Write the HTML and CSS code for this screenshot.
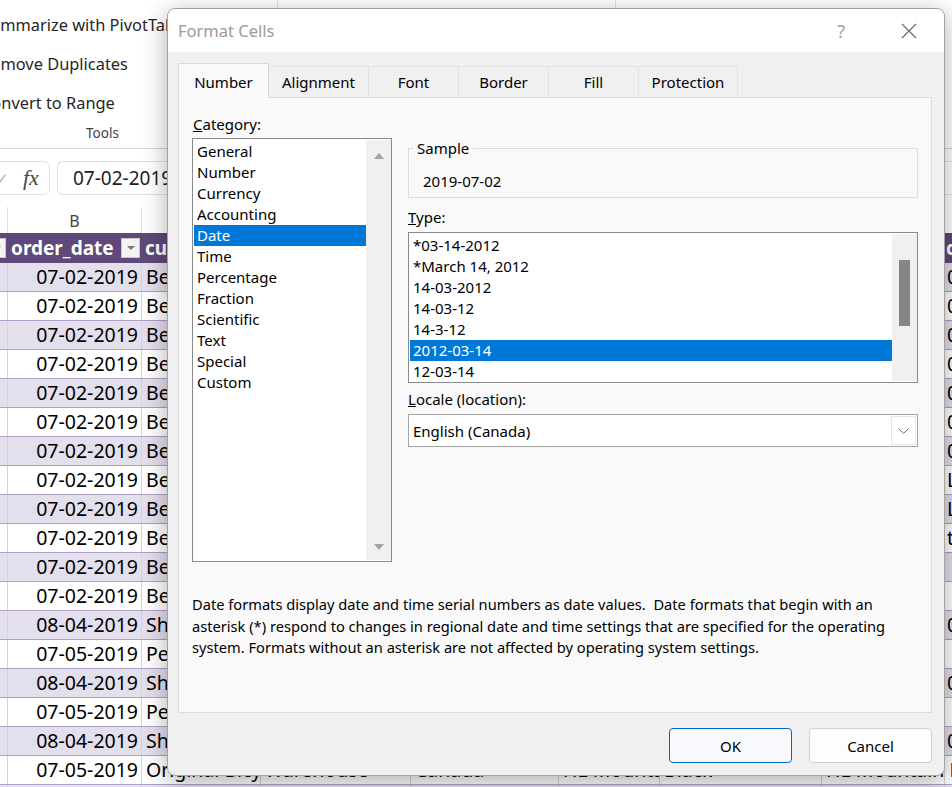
FILE: index.html
```html
<!DOCTYPE html>
<html>
<head>
<meta charset="utf-8">
<link rel="stylesheet" href="styles.css">
</head>
<body>
<div class="excel">
  <div class="ribbon">
    <div class="rb-group g1">
      <div class="rb-cmds">
        <div class="cmd">Summarize with PivotTable</div>
        <div class="cmd">Remove Duplicates</div>
        <div class="cmd">Convert to Range</div>
      </div>
      <div class="rb-label">Tools</div>
    </div>
    <div class="rb-group g2"></div>
    <div class="rb-group g3"></div>
  </div>

  <div class="fbar">
    <div class="fx-box"><span class="check">✓</span><span class="fx">fx</span></div>
    <div class="f-input">07-02-2019</div>
  </div>

  <div class="sheet">
    <div class="row colhdr">
      <div class="c"></div><div class="c">B</div><div class="c">C</div><div class="c">D</div><div class="c">E</div><div class="c">F</div><div class="c">G</div><div class="c">H</div><div class="c">I</div>
    </div>
    <div class="row thead">
      <div class="c hc first"><span class="dd"><span class="tri"></span></span></div>
      <div class="c hc"><span class="ht">order_date</span><span class="dd"><span class="tri"></span></span></div>
      <div class="c hc"><span class="ht">customer_name</span></div>
      <div class="c hc"><span class="ht">store_type</span></div>
      <div class="c hc"><span class="ht">country</span></div>
      <div class="c hc"><span class="ht">product</span></div>
      <div class="c hc"><span class="ht">color</span></div>
      <div class="c hc"><span class="ht">model</span></div>
      <div class="c hc last"><span class="ht">description</span></div>
    </div>

    <div class="row band"><div class="c"></div><div class="c num">07-02-2019</div><div class="c">Bellevue Bike Store</div><div class="c">Specialty</div><div class="c">United States</div><div class="c">Road Frame</div><div class="c">Red</div><div class="c">Road-150</div><div class="c last">0</div></div>
    <div class="row"><div class="c"></div><div class="c num">07-02-2019</div><div class="c">Bellevue Bike Store</div><div class="c">Specialty</div><div class="c">United States</div><div class="c">Road Frame</div><div class="c">Red</div><div class="c">Road-150</div><div class="c last">0</div></div>
    <div class="row band"><div class="c"></div><div class="c num">07-02-2019</div><div class="c">Bellevue Bike Store</div><div class="c">Specialty</div><div class="c">United States</div><div class="c">Road Frame</div><div class="c">Red</div><div class="c">Road-150</div><div class="c last">0</div></div>
    <div class="row"><div class="c"></div><div class="c num">07-02-2019</div><div class="c">Bellevue Bike Store</div><div class="c">Specialty</div><div class="c">United States</div><div class="c">Road Frame</div><div class="c">Red</div><div class="c">Road-150</div><div class="c last">0</div></div>
    <div class="row band"><div class="c"></div><div class="c num">07-02-2019</div><div class="c">Bellevue Bike Store</div><div class="c">Specialty</div><div class="c">United States</div><div class="c">Road Frame</div><div class="c">Red</div><div class="c">Road-150</div><div class="c last">0</div></div>
    <div class="row"><div class="c"></div><div class="c num">07-02-2019</div><div class="c">Bellevue Bike Store</div><div class="c">Specialty</div><div class="c">United States</div><div class="c">Road Frame</div><div class="c">Red</div><div class="c">Road-150</div><div class="c last">0</div></div>
    <div class="row band"><div class="c"></div><div class="c num">07-02-2019</div><div class="c">Bellevue Bike Store</div><div class="c">Specialty</div><div class="c">United States</div><div class="c">Road Frame</div><div class="c">Red</div><div class="c">Road-150</div><div class="c last">0</div></div>
    <div class="row"><div class="c"></div><div class="c num">07-02-2019</div><div class="c">Bellevue Bike Store</div><div class="c">Specialty</div><div class="c">United States</div><div class="c">Mountain</div><div class="c">Silver</div><div class="c">Mountain-200</div><div class="c last">Lo</div></div>
    <div class="row band"><div class="c"></div><div class="c num">07-02-2019</div><div class="c">Bellevue Bike Store</div><div class="c">Specialty</div><div class="c">United States</div><div class="c">Mountain</div><div class="c">Silver</div><div class="c">Mountain-200</div><div class="c last">Lo</div></div>
    <div class="row"><div class="c"></div><div class="c num">07-02-2019</div><div class="c">Bellevue Bike Store</div><div class="c">Specialty</div><div class="c">United States</div><div class="c">Touring</div><div class="c">Blue</div><div class="c">Touring-1000</div><div class="c last">te</div></div>
    <div class="row band"><div class="c"></div><div class="c num">07-02-2019</div><div class="c">Bellevue Bike Store</div><div class="c">Specialty</div><div class="c">United States</div><div class="c">Touring</div><div class="c">Blue</div><div class="c">Touring-1000</div><div class="c last"></div></div>
    <div class="row"><div class="c"></div><div class="c num">07-02-2019</div><div class="c">Bellevue Bike Store</div><div class="c">Specialty</div><div class="c">United States</div><div class="c">Touring</div><div class="c">Blue</div><div class="c">Touring-1000</div><div class="c last"></div></div>
    <div class="row band"><div class="c"></div><div class="c num">08-04-2019</div><div class="c">Shore Bicycles</div><div class="c">Specialty</div><div class="c">Canada</div><div class="c">Road Frame</div><div class="c">Black</div><div class="c">Road-250</div><div class="c last">0</div></div>
    <div class="row"><div class="c"></div><div class="c num">07-05-2019</div><div class="c">Pedal Pushers</div><div class="c">Warehouse</div><div class="c">Canada</div><div class="c">Road Frame</div><div class="c">Black</div><div class="c">Road-250</div><div class="c last"></div></div>
    <div class="row band"><div class="c"></div><div class="c num">08-04-2019</div><div class="c">Shore Bicycles</div><div class="c">Specialty</div><div class="c">Canada</div><div class="c">Road Frame</div><div class="c">Black</div><div class="c">Road-250</div><div class="c last">0</div></div>
    <div class="row"><div class="c"></div><div class="c num">07-05-2019</div><div class="c">Pedal Pushers</div><div class="c">Warehouse</div><div class="c">Canada</div><div class="c">Road Frame</div><div class="c">Black</div><div class="c">Road-250</div><div class="c last"></div></div>
    <div class="row band"><div class="c"></div><div class="c num">08-04-2019</div><div class="c">Shore Bicycles</div><div class="c">Specialty</div><div class="c">Canada</div><div class="c">Road Frame</div><div class="c">Black</div><div class="c">Road-250</div><div class="c last">0</div></div>
    <div class="row"><div class="c"></div><div class="c num">07-05-2019</div><div class="c">Original Bicycle Supply</div><div class="c">Warehouse</div><div class="c">Canada</div><div class="c">HL Mountain Frame</div><div class="c">Black</div><div class="c ov">HL Mountain Frame - Black</div><div class="c last"></div></div>
    <div class="row band"><div class="c"></div><div class="c num">08-04-2019</div><div class="c">Shore Bicycles</div><div class="c">Specialty</div><div class="c">Canada</div><div class="c">Road Frame</div><div class="c">Black</div><div class="c">Road-250</div><div class="c last">0</div></div>
  </div>
</div>

<div class="dialog">
  <div class="dlg-title">
    <span class="t">Format Cells</span>
    <span class="help">?</span>
    <svg class="close" width="16" height="16" viewBox="0 0 16 16"><path d="M1 1 L15 15 M15 1 L1 15" stroke="#6b6b6b" stroke-width="1.2" fill="none"/></svg>
  </div>
  <div class="dlg-body">
    <div class="tabs">
      <div class="tab active w91">Number</div>
      <div class="tab w101">Alignment</div>
      <div class="tab w91">Font</div>
      <div class="tab w91">Border</div>
      <div class="tab w91">Fill</div>
      <div class="tab w100">Protection</div>
    </div>
    <div class="panel">
      <div class="cols">
        <div class="left">
          <div class="lbl cat-lbl"><u>C</u>ategory:</div>
          <div class="listbox cat">
            <div class="items">
              <div class="it">General</div>
              <div class="it">Number</div>
              <div class="it">Currency</div>
              <div class="it">Accounting</div>
              <div class="it sel">Date</div>
              <div class="it">Time</div>
              <div class="it">Percentage</div>
              <div class="it">Fraction</div>
              <div class="it">Scientific</div>
              <div class="it">Text</div>
              <div class="it">Special</div>
              <div class="it">Custom</div>
            </div>
            <div class="sb arrows">
              <svg width="10" height="6" viewBox="0 0 10 6"><path d="M0 6 L5 0 L10 6 Z" fill="#a3a3a3"/></svg>
              <svg width="10" height="6" viewBox="0 0 10 6"><path d="M0 0 L10 0 L5 6 Z" fill="#a3a3a3"/></svg>
            </div>
          </div>
        </div>
        <div class="right">
          <fieldset class="sample">
            <legend>Sample</legend>
            <div class="sample-val">2019-07-02</div>
          </fieldset>
          <div class="lbl type-lbl"><u>T</u>ype:</div>
          <div class="listbox type">
            <div class="items">
              <div class="it">*03-14-2012</div>
              <div class="it">*March 14, 2012</div>
              <div class="it">14-03-2012</div>
              <div class="it">14-03-12</div>
              <div class="it">14-3-12</div>
              <div class="it sel">2012-03-14</div>
              <div class="it">12-03-14</div>
            </div>
            <div class="sb"><div class="thumb"></div></div>
          </div>
          <div class="lbl loc-lbl"><u>L</u>ocale (location):</div>
          <div class="combo">
            <span class="combo-val">English (Canada)</span>
            <span class="combo-btn"><svg width="11" height="6" viewBox="0 0 11 6"><path d="M0.5 0.5 L5.5 5.5 L10.5 0.5" stroke="#6b6b6b" stroke-width="1" fill="none"/></svg></span>
          </div>
        </div>
      </div>
      <p class="desc">Date formats display date and time serial numbers as date values.&nbsp; Date formats that begin with an asterisk (*) respond to changes in regional date and time settings that are specified for the operating system. Formats without an asterisk are not affected by operating system settings.</p>
    </div>
    <div class="btns">
      <button class="btn ok">OK</button>
      <button class="btn">Cancel</button>
    </div>
  </div>
</div>
</body>
</html>
```
FILE: styles.css
```css
* { box-sizing: border-box; }

body {
  margin: 0;
  width: 952px;
  height: 787px;
  overflow: hidden;
  position: relative;
  background: #fff;
  font-family: "Noto Sans", "Open Sans", sans-serif;
  color: #000;
}

/* ---------- Excel background ---------- */
.excel { width: 952px; overflow: hidden; }

.ribbon {
  height: 149px;
  border-bottom: 1px solid #d6d6d6;
  display: flex;
  background: #fff;
}
.rb-group { height: 140px; border-right: 1px solid #e1e1e1; }
.g1 {
  margin-left: -72px;
  width: 350px;
  flex: none;
  display: flex;
  flex-direction: column;
}
.g2 { width: 338px; flex: none; }
.g3 { flex: 1; border-right: none; }
.rb-cmds { padding-left: 53px; padding-top: 5px; }
.cmd {
  height: 39px;
  line-height: 39px;
  font-size: 16.4px;
  color: #262626;
  white-space: nowrap;
}
.rb-label {
  text-align: center;
  font-size: 13.5px;
  color: #444;
  line-height: 20px;
  margin-top: 1px;
}

.fbar {
  height: 56px;
  display: flex;
  align-items: flex-start;
  gap: 7px;
  padding-top: 12px;
}
.fx-box {
  flex: none;
  margin-left: -40px;
  width: 90px;
  height: 34px;
  border: 1px solid #e0e0e0;
  border-radius: 6px;
  display: flex;
  align-items: center;
  gap: 14px;
  padding-left: 35px;
}
.check { color: #b0b0b0; font-size: 15px; }
.fx {
  font-family: "Liberation Serif", serif;
  font-style: italic;
  font-size: 22px;
  color: #444;
}
.f-input {
  flex: 1;
  height: 34px;
  border: 1px solid #e0e0e0;
  border-radius: 6px 0 0 6px;
  border-right: none;
  padding-left: 15px;
  line-height: 32px;
  font-size: 19px;
  color: #222;
}

.sheet { font-size: 19.5px; }
.row {
  display: grid;
  grid-template-columns: 8px 134px 119px 150px 148px 101px 162px 123px 60px;
  height: 29px;
  border-bottom: 1px solid #b1a0c7;
  background: #fff;
}
.row.band { background: #e4dfec; }
.c {
  border-right: 1px solid #d4d4d4;
  white-space: nowrap;
  overflow: hidden;
  line-height: 28px;
  padding-left: 4px;
}
.c.num { text-align: right; padding-right: 3px; padding-left: 0; }
.c.ov { overflow: visible; }
.c.last { padding-left: 2px; }

.row.colhdr {
  height: 28px;
  border-bottom: none;
  background: #fff;
}
.colhdr .c {
  text-align: center;
  font-size: 16px;
  color: #444;
  border-right: 1px solid #e1e1e1;
  line-height: 28px;
  padding: 0;
  margin-top: 2px;
}

.row.thead {
  height: 30px;
  background: #60497a;
  border-bottom: none;
}
.hc {
  border-right: none;
  display: flex;
  align-items: center;
  justify-content: space-between;
  padding-left: 3px;
  overflow: visible;
}
.hc.first { justify-content: flex-end; padding: 0; }
.hc.last { padding-left: 1px; }
.ht {
  color: #fff;
  font-weight: bold;
  font-size: 19px;
  overflow: hidden;
}
.dd {
  flex: none;
  width: 19px;
  height: 20px;
  background: #f3f3f3;
  border: 1px solid #c8c8c8;
  margin-right: 2px;
  display: flex;
  align-items: center;
  justify-content: center;
}
.tri {
  width: 0; height: 0;
  border-left: 4px solid transparent;
  border-right: 4px solid transparent;
  border-top: 4px solid #777;
}

/* ---------- Dialog ---------- */
.dialog {
  position: absolute;
  left: 167px;
  top: 8px;
  width: 778px;
  height: 768px;
  border: 1px solid #a3a3a3;
  border-radius: 8px;
  box-shadow: 0 6px 26px rgba(0, 0, 0, 0.32);
  overflow: hidden;
  display: flex;
  flex-direction: column;
  background: #f0f0f0;
  font-size: 15px;
  color: #000;
}
.dlg-title {
  height: 43px;
  flex: none;
  background: #fff;
  display: flex;
  align-items: center;
  padding-left: 10px;
}
.dlg-title .t { flex: 1; font-size: 16.5px; color: #9b9b9b; }
.help { font-size: 18px; color: #a3a3a3; margin-right: 56px; }
.close { margin-right: 27px; }

.dlg-body {
  flex: 1;
  display: flex;
  flex-direction: column;
  padding: 11px 12px 12px 10px;
}
.tabs {
  display: flex;
  align-items: flex-end;
  height: 34px;
  flex: none;
}
.tab {
  height: 31px;
  line-height: 30px;
  text-align: center;
  border: 1px solid #e2e2e2;
  border-bottom: none;
  margin-left: -1px;
  background: #f0f0f0;
}
.tab:first-child { margin-left: 0; }
.tab.active {
  height: 35px;
  margin-bottom: -1px;
  padding-top: 3px;
  background: #f9f9f9;
  border-color: #d9d9d9;
  position: relative;
  z-index: 1;
}
.w91 { width: 91px; }
.w100 { width: 100px; }
.w101 { width: 101px; }

.panel {
  flex: 1;
  border: 1px solid #dcdcdc;
  background: #f9f9f9;
  padding: 17px 13px 0 13px;
}
.cols { display: flex; gap: 16px; }
.left { width: 200px; }
.right { width: 510px; }
.lbl { line-height: 18px; }
.cat-lbl { padding-left: 1px; }

.listbox {
  border: 1px solid #8a8a8a;
  background: #fff;
  display: flex;
}
.listbox .items { flex: 1; padding: 1px 0 0 1px; }
.it { height: 21px; line-height: 21px; padding-left: 3px; white-space: nowrap; }
.it.sel { background: #0078d7; color: #fff; }
.sb { width: 25px; flex: none; background: #f0f0f0; margin: 1px 0; }
.listbox.cat { margin-top: 5px; height: 424px; }
.listbox.cat .items { padding-top: 2px; }
.sb.arrows {
  display: flex;
  flex-direction: column;
  justify-content: space-between;
  align-items: center;
  padding: 13px 0 10px;
}

fieldset.sample {
  margin: 25px 0 0;
  padding: 0 4px 7px;
  border: 1px solid #dcdcdc;
  min-width: 0;
}
fieldset.sample legend {
  padding: 0 4px;
  line-height: 17px;
}
.sample-val { padding: 15px 0 0 10px; line-height: 18px; }

.type-lbl { margin-top: 10px; }
.listbox.type { margin-top: 6px; height: 151px; padding-left: 1px; }
.listbox.type .items { padding: 2px 0 0; }
.listbox.type .it { padding-left: 3px; }
.thumb {
  width: 11px;
  height: 66px;
  background: #868686;
  margin: 26px 0 0 7px;
}

.loc-lbl { margin-top: 7px; }
.combo {
  margin-top: 6px;
  height: 33px;
  border: 1px solid #a5a5a5;
  background: #fff;
  display: flex;
  align-items: stretch;
}
.combo-val { flex: 1; padding-left: 4px; line-height: 32px; }
.combo-btn {
  width: 25px;
  margin: 1px;
  border: 1px solid #e6e6e6;
  display: flex;
  align-items: center;
  justify-content: center;
}

.desc {
  margin: 32px 0 0;
  line-height: 21.5px;
  width: 726px;
  font-size: 14.65px;
}

.btns {
  flex: none;
  display: flex;
  justify-content: flex-end;
  gap: 17px;
  margin-top: 15px;
}
.btn {
  width: 123px;
  height: 35px;
  border: 1px solid #d0d0d0;
  border-radius: 4px;
  background: #fdfdfd;
  font-family: "Noto Sans", "Open Sans", sans-serif;
  font-size: 15px;
  color: #000;
  padding: 0;
}
.btn.ok { border-color: #0067c0; background: #f7f9fc; }
```
